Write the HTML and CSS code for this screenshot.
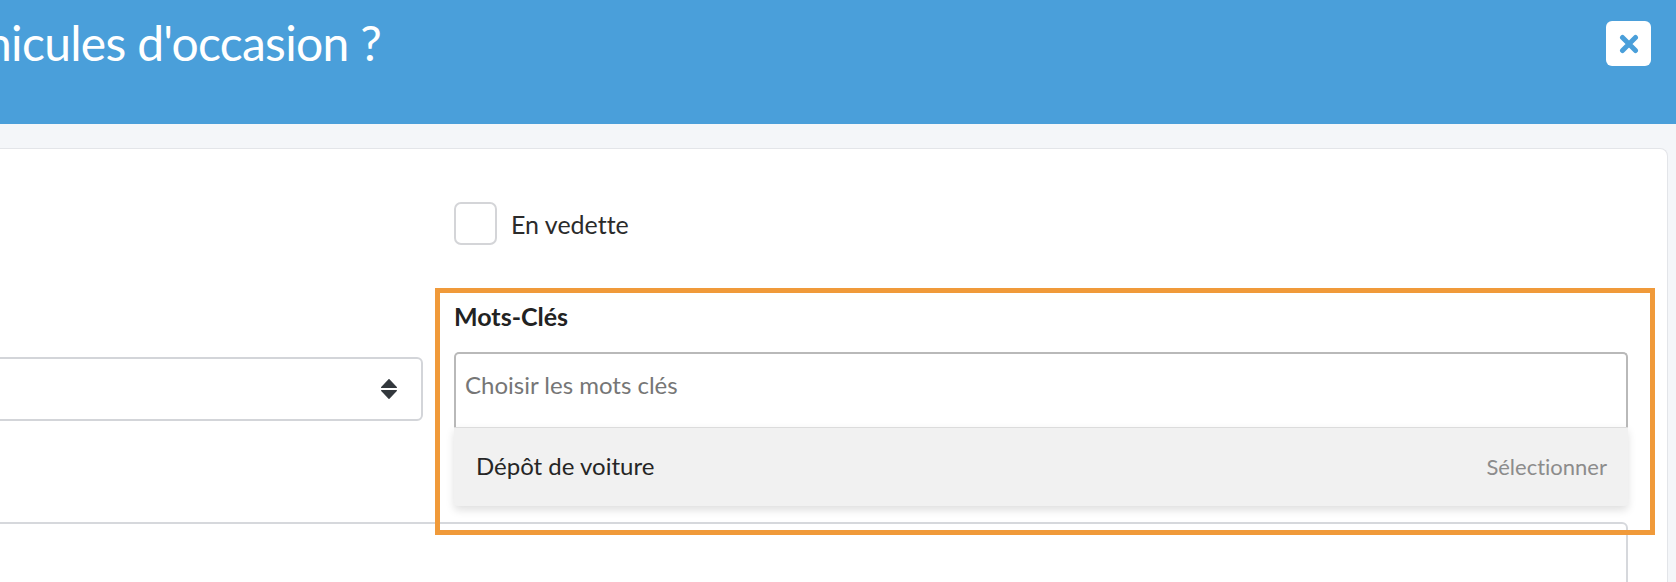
FILE: index.html
```html
<!DOCTYPE html>
<html lang="fr">
<head>
<meta charset="utf-8">
<title>Mots-Clés</title>
<link rel="stylesheet" href="styles.css">
</head>
<body>
<div class="modal">
  <header class="modal-header">
    <div class="title-clip"><h1 class="title">véhicules d'occasion ?</h1></div>
    <button class="close" type="button" aria-label="Fermer">
      <svg width="20" height="20" viewBox="0 0 20 20"><path d="M3.5 3.5 L16.5 16.5 M16.5 3.5 L3.5 16.5" fill="none" stroke="#4a9fda" stroke-width="5" stroke-linecap="round"/></svg>
    </button>
  </header>
  <div class="modal-body">
    <div class="card">
      <div class="form-grid">
        <div class="col-left">
          <div class="select">
            <svg width="16" height="20" viewBox="0 0 16 20"><path d="M8 0.6 L15.4 8.4 H0.6 Z M0.6 11.6 H15.4 L8 19.4 Z" fill="#33383d" stroke="#33383d" stroke-width="1.2" stroke-linejoin="round"/></svg>
          </div>
        </div>
        <div class="col-right">
          <label class="check"><span class="box"></span><span>En vedette</span></label>
          <div class="field">
            <div class="field-label">Mots-Clés</div>
            <div class="ms">
              <div class="ms-input">Choisir les mots clés</div>
              <ul class="ms-options">
                <li class="ms-option"><span class="opt-text">Dépôt de voiture</span><span class="opt-hint">Sélectionner</span></li>
              </ul>
            </div>
            <div class="highlight"></div>
          </div>
        </div>
      </div>
      <div class="textarea"></div>
    </div>
  </div>
</div>
</body>
</html>
```
FILE: styles.css
```css
html, body {
  margin: 0;
  padding: 0;
}
body {
  width: 1676px;
  height: 582px;
  overflow: hidden;
  background: #f4f6f9;
  font-family: Lato, "Open Sans", "Noto Sans", sans-serif;
  font-variant-ligatures: none;
}
.modal-header {
  height: 124px;
  background: #4a9fda;
  display: flex;
  justify-content: space-between;
  align-items: flex-start;
  padding-right: 25px;
  box-sizing: border-box;
}
.title-clip {
  width: 381px;
  display: flex;
  justify-content: flex-end;
  overflow: hidden;
  padding-top: 14px;
}
.title {
  margin: 0;
  flex: none;
  font-size: 48px;
  font-weight: 400;
  line-height: 58px;
  letter-spacing: -0.7px;
  color: #ffffff;
  white-space: nowrap;
}
.close {
  margin-top: 21px;
  width: 45px;
  height: 45px;
  padding: 0;
  border: none;
  border-radius: 6px;
  background: #ffffff;
  display: flex;
  align-items: center;
  justify-content: center;
}
.modal-body {
  padding-top: 24px;
}
.card {
  margin: 0 8px 0 -60px;
  height: 434px;
  overflow: hidden;
  background: #ffffff;
  border: 1px solid #e3e5e9;
  border-bottom: none;
  border-radius: 0 8px 0 0;
  padding: 53px 39px 0 39px;
  box-sizing: border-box;
}
.form-grid {
  display: grid;
  grid-template-columns: 443px 1fr;
  column-gap: 31px;
}
.select {
  margin-top: 155px;
  height: 64px;
  box-sizing: border-box;
  border: 2px solid #d3d5d9;
  border-radius: 6px;
  display: flex;
  align-items: center;
  justify-content: flex-end;
  padding-right: 24px;
}
.check {
  display: flex;
  align-items: center;
  gap: 14px;
  height: 43px;
  font-size: 25px;
  color: #2b2b2b;
}
.box {
  width: 43px;
  height: 43px;
  box-sizing: border-box;
  border: 2px solid #d4d5d8;
  border-radius: 7px;
  background: #ffffff;
}
.field {
  position: relative;
  margin-top: 56px;
}
.field-label {
  font-size: 25px;
  font-weight: 700;
  line-height: 30px;
  color: #222222;
  margin-bottom: 21px;
}
.ms {
  position: relative;
}
.ms-input {
  height: 75px;
  box-sizing: border-box;
  border: 2px solid #b9b9b9;
  border-bottom: none;
  border-radius: 5px 5px 0 0;
  padding: 16px 0 0 9px;
  font-size: 24px;
  line-height: 29px;
  color: #767676;
}
.ms-options {
  position: absolute;
  top: 100%;
  left: 0;
  right: 0;
  margin: 0;
  padding: 0;
  list-style: none;
  background: #f1f1f1;
  border-top: 1px solid #dcdcdc;
  border-radius: 0 0 4px 4px;
  box-shadow: 0 4px 8px rgba(0, 0, 0, 0.13);
  z-index: 2;
}
.ms-option {
  height: 78px;
  box-sizing: border-box;
  padding: 23px 21px 0 22px;
  display: flex;
  justify-content: space-between;
  align-items: baseline;
  line-height: 30px;
}
.opt-text {
  font-size: 24px;
  color: #262626;
}
.opt-hint {
  font-size: 22px;
  color: #8c8c8c;
}
.highlight {
  position: absolute;
  top: -13px;
  left: -19px;
  right: -27px;
  height: 247px;
  box-sizing: border-box;
  border: 5px solid #f09a3a;
  pointer-events: none;
  z-index: 3;
}
.textarea {
  margin-top: 95px;
  height: 100px;
  box-sizing: border-box;
  border: 2px solid #d6d8dc;
  border-radius: 6px;
}
```
